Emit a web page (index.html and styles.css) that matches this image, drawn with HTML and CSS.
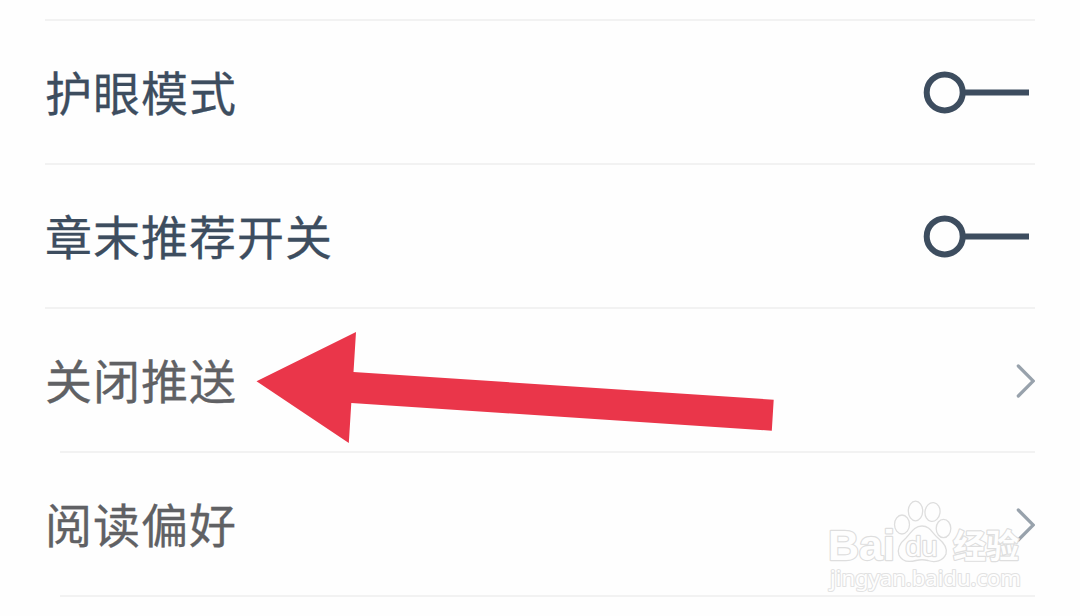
FILE: index.html
```html
<!DOCTYPE html>
<html lang="zh-CN">
<head>
    <meta charset="UTF-8">
    <meta name="viewport" content="width=device-width, initial-scale=1.0">
    <title>阅读设置</title>
    <link rel="stylesheet" href="styles.css">
</head>
<body>

<div class="settings">
    <div class="row">
        <span class="label">护眼模式</span>
        <svg class="toggle" width="106" height="44" viewBox="0 0 106 44">
            <circle cx="21.7" cy="21.4" r="18" />
            <path d="M40 21.4H106" />
        </svg>
    </div>
    <div class="row">
        <span class="label">章末推荐开关</span>
        <svg class="toggle" width="106" height="44" viewBox="0 0 106 44">
            <circle cx="21.7" cy="21.4" r="18" />
            <path d="M40 21.4H106" />
        </svg>
    </div>
    <div class="row link inset">
        <span class="label">关闭推送</span>
        <svg class="chevron" width="20" height="36" viewBox="0 0 20 36">
            <path d="M3.3 3L18.3 18L3.3 33" />
        </svg>
    </div>
    <div class="row link inset">
        <span class="label">阅读偏好</span>
        <svg class="chevron" width="20" height="36" viewBox="0 0 20 36">
            <path d="M3.3 3L18.3 18L3.3 33" />
        </svg>
    </div>
</div>

<!-- 红色箭头 -->
<svg class="arrow" width="520" height="114" viewBox="256 331 520 114">
    <polygon points="256.5,381.3 356,332 353.5,372 773.7,399.7 771.8,430.7 351.3,403 348.8,443" />
</svg>

<!-- 水印 -->
<svg class="watermark" width="210" height="100" viewBox="820 496 210 100">
    <g class="paw">
        <ellipse cx="902" cy="524.5" rx="7.5" ry="9.5" />
        <ellipse cx="915.5" cy="511" rx="7.2" ry="9.8" />
        <ellipse cx="932.5" cy="512" rx="7.5" ry="9.5" transform="rotate(8 932.5 512)" />
        <ellipse cx="943.5" cy="528.5" rx="7.3" ry="9.2" />
        <path d="M922 526C914 526 911 533 906 538C900 543 897 549 899 555C902 562 910 562 916 560.5Q922 559 928 560.5C935 563 943 561 946 554C948 547 943 542 938 538C932 533 930 526 922 526Z" />
    </g>
    <text class="brand" x="828" y="560" textLength="67" lengthAdjust="spacingAndGlyphs">Bai</text>
    <text class="du" x="905.5" y="555.5" textLength="32" lengthAdjust="spacingAndGlyphs">du</text>
    <text class="cn" x="953" y="557.5" textLength="66">经验</text>
    <text class="url" x="830" y="586" textLength="191" lengthAdjust="spacingAndGlyphs">jingyan.baidu.com</text>
</svg>

</body>
</html>
```

FILE: styles.css
```css
body {
    margin: 0;
    height: 616px;
    overflow: hidden;
    position: relative;
    background-color: #fefefe;
    font-family: "Noto Sans CJK SC", sans-serif;
}

.settings {
    margin: 19px 45px 0;
    border-top: 2px solid #f2f2f2;
}

.row {
    display: flex;
    justify-content: space-between;
    align-items: center;
    box-sizing: border-box;
    height: 144px;
    background: linear-gradient(#f2f2f2, #f2f2f2) right bottom / 100% 2px no-repeat;
}

.row.inset {
    background-size: calc(100% - 15px) 2px;
}

.label {
    padding-bottom: 4px;
    font-size: 47px;
    letter-spacing: 1px;
    line-height: 72px;
    color: #3d4d5f;
    -webkit-text-stroke: 0.3px currentColor;
}

.link .label {
    color: #606164;
}

.toggle {
    margin-right: 6px;
    fill: none;
    stroke: #3d4d5f;
    stroke-width: 6;
}

.chevron {
    fill: none;
    stroke: #98a2ac;
    stroke-width: 3.2;
    stroke-linecap: round;
}

.arrow {
    position: absolute;
    left: 256px;
    top: 331px;
    fill: #ea364a;
}

.watermark {
    position: absolute;
    left: 820px;
    top: 496px;
    fill: #fefefe;
    stroke: #dedede;
    stroke-width: 1.3;
    stroke-linejoin: round;
}

.watermark text {
    stroke-width: 2.4;
    paint-order: stroke;
}

.brand {
    font: bold 42px "Liberation Sans", sans-serif;
}

.du {
    font: 28px "Liberation Sans", sans-serif;
}

.cn {
    font: bold 33px "Noto Sans CJK SC", sans-serif;
}

.watermark .url {
    font: 21px "Noto Sans", sans-serif;
    stroke: #e2e2e2;
    stroke-width: 2;
}
```
